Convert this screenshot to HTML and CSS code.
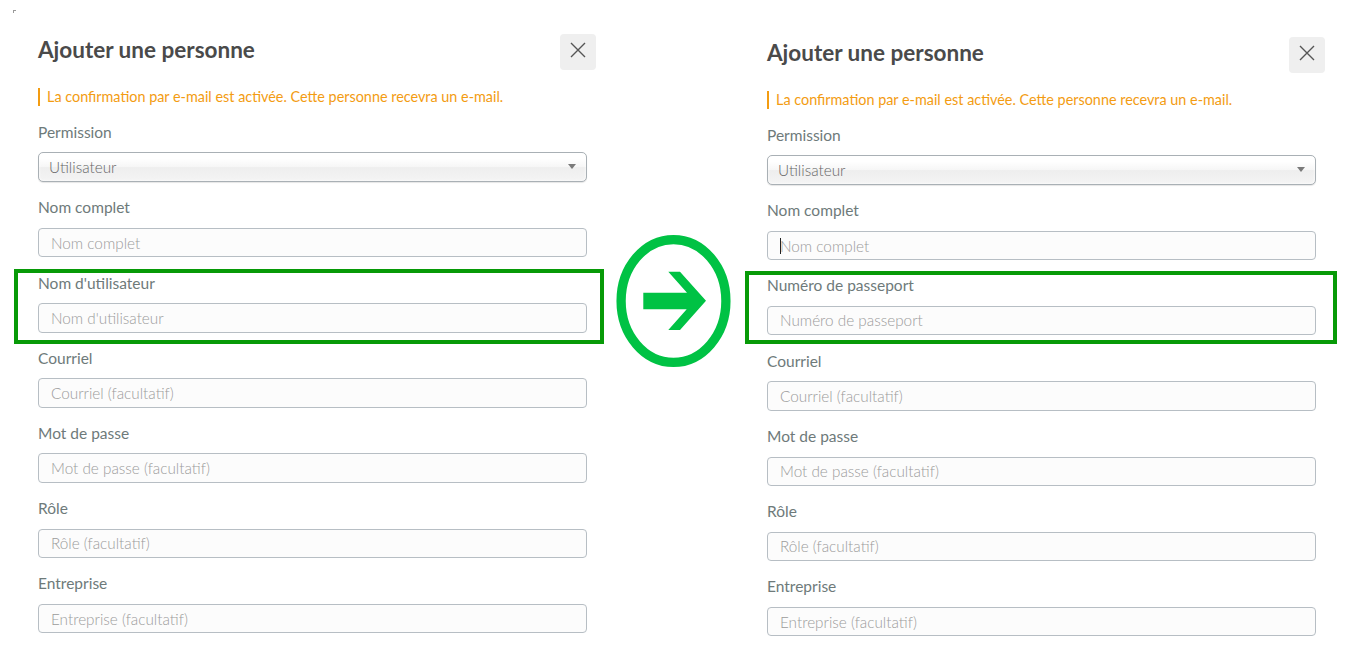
FILE: index.html
```html
<!DOCTYPE html>
<html lang="fr">
<head>
<meta charset="utf-8">
<title>Ajouter une personne</title>
<link rel="stylesheet" href="styles.css">
</head>
<body>
<div class="page">
  <section class="panel panel--left">
    <span class="corner-mark"></span>
    <header class="panel-header">
      <h2 class="panel-title">Ajouter une personne</h2>
      <button class="close-btn" type="button" aria-label="Fermer">
        <svg width="16" height="16" viewBox="0 0 16 16"><path d="M1 1 L15 15 M15 1 L1 15" stroke="#555" stroke-width="1.4" fill="none"/></svg>
      </button>
    </header>
    <p class="notice">La confirmation par e-mail est activée. Cette personne recevra un e-mail.</p>
    <form class="form">
      <div class="field">
        <label class="field-label">Permission</label>
        <div class="select-wrap"><select class="select"><option>Utilisateur</option></select></div>
      </div>
      <div class="field">
        <label class="field-label">Nom complet</label>
        <div class="input-wrap"><input class="input" placeholder="Nom complet"></div>
      </div>
      <div class="field highlight highlight--left">
        <label class="field-label">Nom d'utilisateur</label>
        <div class="input-wrap"><input class="input" placeholder="Nom d'utilisateur"></div>
      </div>
      <div class="field">
        <label class="field-label">Courriel</label>
        <div class="input-wrap"><input class="input" placeholder="Courriel (facultatif)"></div>
      </div>
      <div class="field">
        <label class="field-label">Mot de passe</label>
        <div class="input-wrap"><input class="input" placeholder="Mot de passe (facultatif)"></div>
      </div>
      <div class="field">
        <label class="field-label">Rôle</label>
        <div class="input-wrap"><input class="input" placeholder="Rôle (facultatif)"></div>
      </div>
      <div class="field">
        <label class="field-label">Entreprise</label>
        <div class="input-wrap"><input class="input" placeholder="Entreprise (facultatif)"></div>
      </div>
    </form>
  </section>

  <div class="divider">
    <svg class="arrow-badge" width="120" height="142" viewBox="0 0 120 142">
      <ellipse cx="59.5" cy="71" rx="52.4" ry="61.4" fill="none" stroke="#00c244" stroke-width="9.3"/>
      <polygon points="29.3,62.7 73,62.7 54.3,41.7 66,41.7 92,70.7 66,100 54.3,100 72.7,79.3 29.3,79.3" fill="#00c244"/>
    </svg>
  </div>

  <section class="panel panel--right">
    <header class="panel-header">
      <h2 class="panel-title">Ajouter une personne</h2>
      <button class="close-btn" type="button" aria-label="Fermer">
        <svg width="16" height="16" viewBox="0 0 16 16"><path d="M1 1 L15 15 M15 1 L1 15" stroke="#555" stroke-width="1.4" fill="none"/></svg>
      </button>
    </header>
    <p class="notice">La confirmation par e-mail est activée. Cette personne recevra un e-mail.</p>
    <form class="form">
      <div class="field">
        <label class="field-label">Permission</label>
        <div class="select-wrap"><select class="select"><option>Utilisateur</option></select></div>
      </div>
      <div class="field">
        <label class="field-label">Nom complet</label>
        <div class="input-wrap input-wrap--caret"><input class="input" placeholder="Nom complet"></div>
      </div>
      <div class="field highlight highlight--right">
        <label class="field-label">Numéro de passeport</label>
        <div class="input-wrap"><input class="input" placeholder="Numéro de passeport"></div>
      </div>
      <div class="field">
        <label class="field-label">Courriel</label>
        <div class="input-wrap"><input class="input" placeholder="Courriel (facultatif)"></div>
      </div>
      <div class="field">
        <label class="field-label">Mot de passe</label>
        <div class="input-wrap"><input class="input" placeholder="Mot de passe (facultatif)"></div>
      </div>
      <div class="field">
        <label class="field-label">Rôle</label>
        <div class="input-wrap"><input class="input" placeholder="Rôle (facultatif)"></div>
      </div>
      <div class="field">
        <label class="field-label">Entreprise</label>
        <div class="input-wrap"><input class="input" placeholder="Entreprise (facultatif)"></div>
      </div>
    </form>
  </section>
</div>
</body>
</html>
```

FILE: styles.css
```css
* { box-sizing: border-box; }

html, body {
  margin: 0;
  padding: 0;
  background: #ffffff;
}

body {
  font-family: Lato, "Open Sans", "Liberation Sans", sans-serif;
  color: #444;
  overflow: hidden;
  height: 660px;
}

.page {
  display: flex;
  align-items: flex-start;
}

.panel {
  position: relative;
  padding-left: 38px;
}

.panel--left {
  width: 610px;
  padding-top: 34px;
}

.panel--right {
  width: 616px;
  padding-top: 37px;
}

.corner-mark {
  position: absolute;
  left: 13px;
  top: 10px;
  width: 3px;
  height: 3px;
  border-top: 1px solid #9a9a9a;
  border-left: 1px solid #9a9a9a;
}

.panel-header {
  display: flex;
  justify-content: space-between;
  align-items: flex-start;
  width: 558px;
}

.panel-title {
  margin: 4px 0 0;
  font-size: 22.5px;
  line-height: 24px;
  font-weight: 700;
  color: #4a4a4a;
}

.close-btn {
  width: 36px;
  height: 36px;
  border: 0;
  border-radius: 4px;
  background: #efefef;
  padding: 8px 0 0;
  display: flex;
  justify-content: center;
  align-items: flex-start;
}

.notice {
  margin: 18px 0 0;
  height: 18px;
  line-height: 18px;
  font-size: 14.4px;
  color: #f39c12;
  border-left: 2px solid #f39c12;
  padding-left: 7px;
}

.form {
  margin-top: 15.7px;
  width: 549px;
  display: flex;
  flex-direction: column;
  gap: 15.2px;
}

.field {
  display: flex;
  flex-direction: column;
}

.field-label {
  display: block;
  font-size: 15.5px;
  line-height: 20px;
  height: 20px;
  color: #6e7a7a;
  margin-bottom: 10.6px;
}

.select-wrap {
  position: relative;
}

.select-wrap::after {
  content: "";
  position: absolute;
  right: 11px;
  top: 12px;
  border-left: 4px solid transparent;
  border-right: 4px solid transparent;
  border-top: 5px solid #7a7a7a;
  pointer-events: none;
}

.select {
  -webkit-appearance: none;
  appearance: none;
  display: block;
  width: 100%;
  height: 30px;
  border: 1px solid #a9b0b5;
  border-radius: 5px;
  padding: 0 10px;
  font-family: inherit;
  font-size: 15.3px;
  font-weight: 300;
  color: #666;
  background-image: linear-gradient(#fff 20%, #f6f6f6 50%, #eee 52%, #f4f4f4 100%);
  box-shadow: 0 0 3px #fff inset, 0 1px 1px rgba(0, 0, 0, 0.1);
}

.input-wrap {
  position: relative;
}

.input {
  display: block;
  width: 100%;
  height: 29.4px;
  border: 1px solid #b7bec4;
  border-radius: 4px;
  background: #fcfcfc;
  padding: 0 12px;
  font-family: inherit;
  font-size: 15.3px;
  font-weight: 300;
  color: #444;
  outline: none;
}

.input::placeholder {
  color: #9b9b9b;
  font-weight: 300;
}

.input-wrap--caret::before {
  content: "";
  position: absolute;
  left: 12.5px;
  top: 7px;
  width: 1px;
  height: 16px;
  background: #222;
}

.highlight {
  border: 4px solid #079a07;
}

.highlight--left {
  margin: -4px -17px -11.1px -24px;
  padding: 0 13px 7px 20px;
}

.highlight--right {
  margin: -4.5px -20.7px -8.3px -22px;
  padding: 0 16.7px 4.8px 18px;
}

.divider {
  width: 119px;
  flex: none;
}

.arrow-badge {
  display: block;
  margin: 230px 0 0 4px;
  overflow: visible;
}
```
